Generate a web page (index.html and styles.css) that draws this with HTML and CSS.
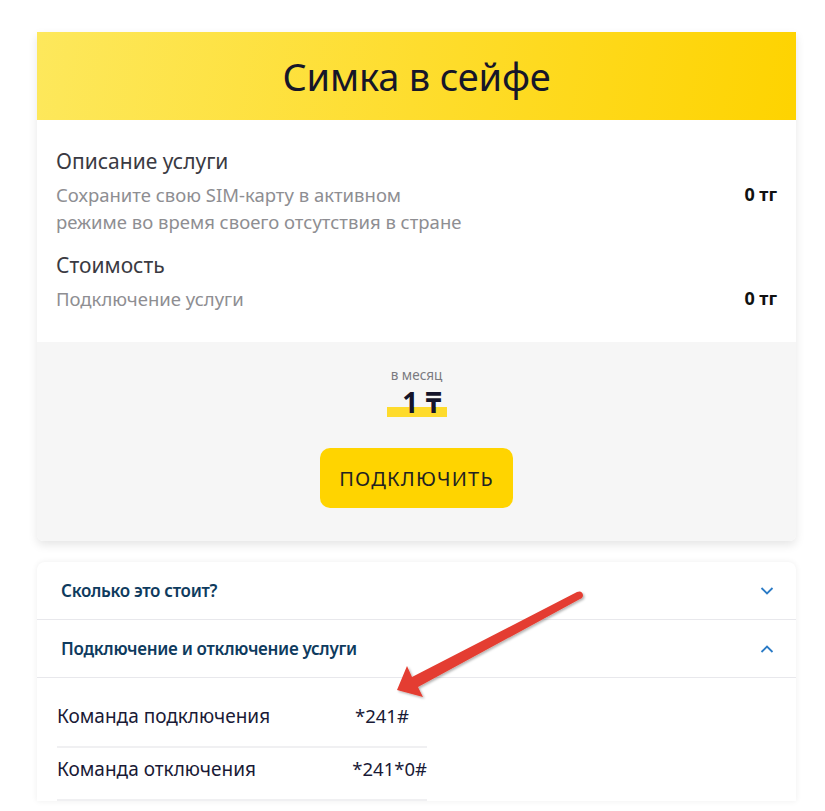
FILE: index.html
```html
<!DOCTYPE html>
<html lang="ru">
<head>
<meta charset="utf-8">
<title>Симка в сейфе</title>
<link rel="stylesheet" href="styles.css">
</head>
<body>
<div class="page">
  <section class="card">
    <header class="hero"><h1>Симка в сейфе</h1></header>
    <div class="info">
      <h2 class="info-title">Описание услуги</h2>
      <div class="info-row">
        <p class="info-text">Сохраните свою SIM-карту в активном<br>режиме во время своего отсутствия в стране</p>
        <span class="price">0 тг</span>
      </div>
      <h2 class="info-title second">Стоимость</h2>
      <div class="info-row">
        <p class="info-text">Подключение услуги</p>
        <span class="price">0 тг</span>
      </div>
    </div>
    <div class="order">
      <div class="period">в месяц</div>
      <div class="amount"><span>1 ₸</span></div>
      <button class="btn">ПОДКЛЮЧИТЬ</button>
    </div>
  </section>

  <section class="accordion">
    <div class="acc-item">
      <span>Сколько это стоит?</span>
      <svg class="chev" width="14" height="10" viewBox="0 0 14 10"><path d="M1.5 2 L7 7.5 L12.5 2" fill="none" stroke="#2b7bc6" stroke-width="1.8"/></svg>
    </div>
    <div class="acc-item">
      <span>Подключение и отключение услуги</span>
      <svg class="chev" width="14" height="10" viewBox="0 0 14 10"><path d="M1.5 8 L7 2.5 L12.5 8" fill="none" stroke="#2b7bc6" stroke-width="1.8"/></svg>
    </div>
    <div class="acc-body">
      <div class="cmd"><span class="cmd-name">Команда подключения</span><span class="cmd-code">*241#</span></div>
      <div class="cmd"><span class="cmd-name">Команда отключения</span><span class="cmd-code">*241*0#</span></div>
    </div>
  </section>

  <svg class="arrow" width="825" height="811" viewBox="0 0 825 811">
    <defs>
      <filter id="sh" x="-10%" y="-10%" width="120%" height="120%">
        <feDropShadow dx="1.5" dy="1.5" stdDeviation="1.2" flood-color="#000" flood-opacity="0.3"/>
      </filter>
    </defs>
    <path d="M397 690 L407 666 L412 677 L577 592 Q582 590 583 595 Q583 598 580 599 L418 687 L423 697 Z" fill="#e43d30" filter="url(#sh)"/>
  </svg>
</div>
</body>
</html>
```

FILE: styles.css
```css
html, body { margin: 0; padding: 0; overflow: hidden; background: #fff; }
body { font-family: "Noto Sans", "Open Sans", sans-serif; color: #222; }
.page { position: relative; width: 825px; height: 811px; padding-top: 32px; box-sizing: border-box; }
.card {
  width: 759px; margin-left: 37px;
  background: #fff;
  box-shadow: 0 4px 10px rgba(0,0,0,0.10);
  border-radius: 0 0 6px 6px;
}
.hero {
  height: 88px;
  background: linear-gradient(100deg, #fde85c 0%, #fedd2e 50%, #fed300 100%);
  display: flex; align-items: center; justify-content: center;
}
.hero h1 {
  margin: 0; font-weight: 400; font-size: 38px; color: #161629; letter-spacing: -0.2px;
}
.info { padding: 27px 19px 30px 19px; }
.info-title { margin: 0; font-weight: 400; font-size: 21px; color: #3a3a42; line-height: 28px; }
.info-title.second { margin-top: 16px; }
.info-row { display: flex; justify-content: space-between; align-items: flex-start; margin-top: 6px; }
.info-text { margin: 0; font-size: 18.5px; line-height: 27px; color: #8e8e92; }
.price { font-weight: 700; font-size: 18px; color: #111; line-height: 27px; }
.order {
  background: #f6f6f6;
  padding: 25px 0 33px;
  display: flex; flex-direction: column; align-items: center;
  border-radius: 0 0 6px 6px;
}
.period { font-size: 13.5px; color: #7a7a7f; line-height: 16px; }
.amount { margin-top: 4px; margin-left: 1px; }
.amount span {
  display: inline-block; font-weight: 700; font-size: 28px; line-height: 30px;
  color: #14142a; padding: 0 5px 0 15px;
  background: linear-gradient(to bottom, transparent 0, transparent 20px, #fedb2c 20px, #fedb2c 30px);
}
.btn {
  margin-top: 30px;
  width: 193px; height: 60px; border: 0; border-radius: 10px;
  background: #ffd400; color: #222;
  font-family: "Noto Sans", "Open Sans", sans-serif;
  font-size: 20px; letter-spacing: 1.2px;
}
.accordion {
  width: 759px; margin: 21px 0 0 37px;
  background: #fff; border-radius: 8px 8px 0 0;
  box-shadow: 0 0 6px rgba(0,0,0,0.07);
}
.acc-item {
  height: 58px; padding: 0 22px 0 24px; box-sizing: border-box;
  display: flex; align-items: center; justify-content: space-between;
  border-bottom: 1px solid #e8e8ec;
  font-size: 17px; font-weight: 600; color: #0e3b5e; letter-spacing: -0.3px;
}
.acc-body { padding: 17px 0 0 20px; }
.cmd {
  width: 370px; height: 53px; box-sizing: border-box; padding-bottom: 10px;
  display: flex; align-items: center;
  border-bottom: 2px solid #f0f0f2; font-size: 19px; color: #1a1a36;
}
.cmd-name { width: 298px; }
.cmd-code { font-size: 18.5px; }
.arrow { position: absolute; left: 0; top: 0; pointer-events: none; }
```
